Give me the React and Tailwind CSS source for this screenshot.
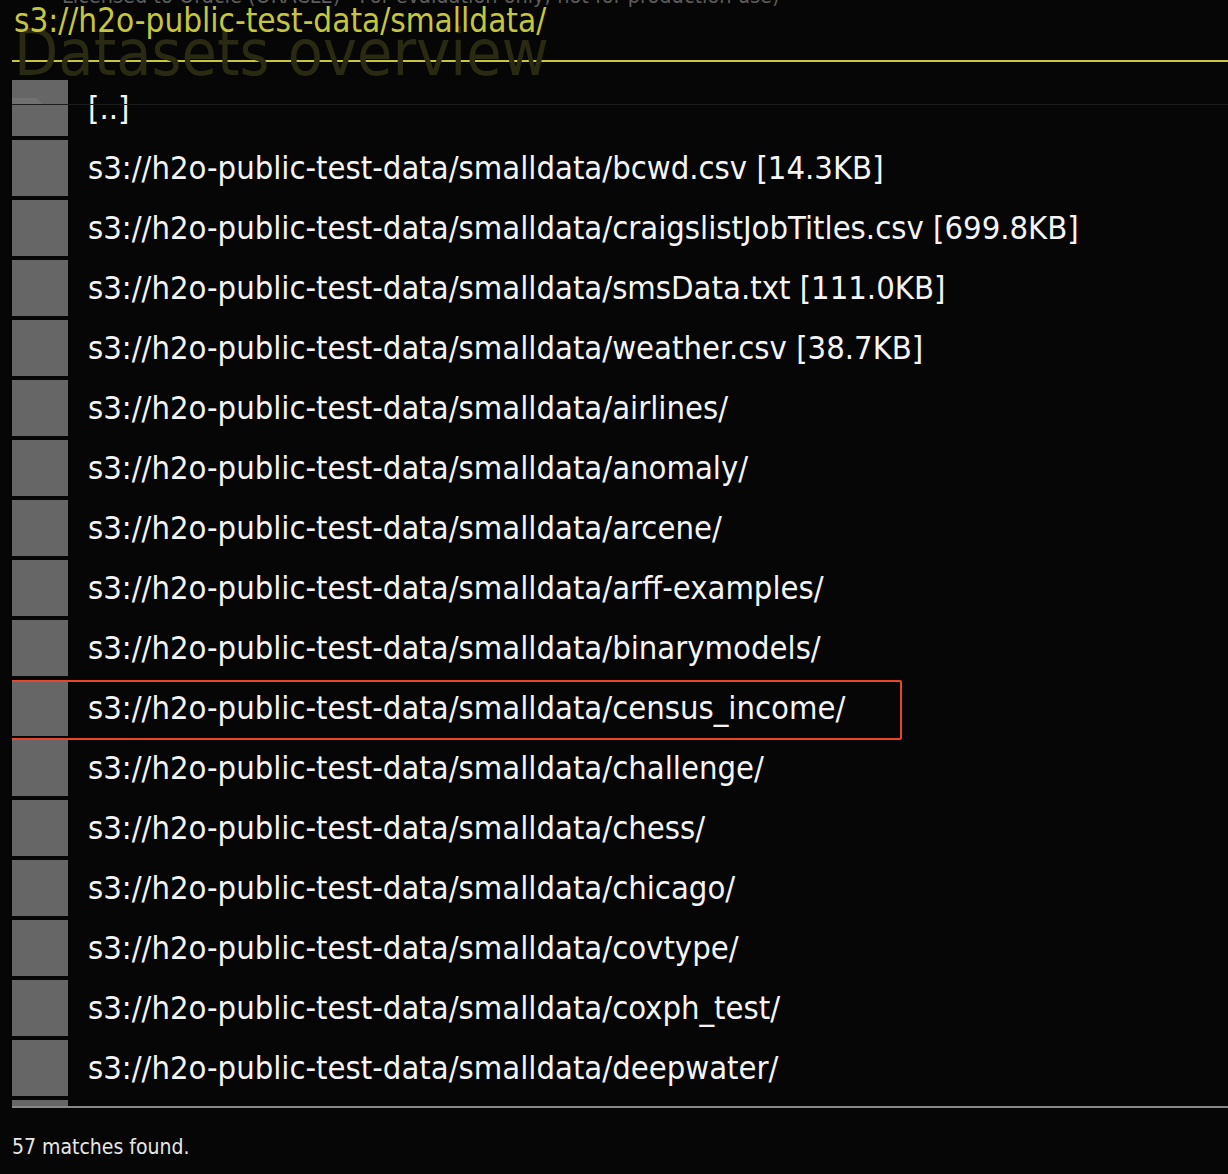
const FONT = "[font-family:'Liberation_Sans_Narrow','DejaVu_Sans_Condensed','Liberation_Sans',sans-serif]";

const base = "s3://h2o-public-test-data/smalldata/";

const rows = [
  { label: "[..]", up: true },
  { label: base + "bcwd.csv [14.3KB]" },
  { label: base + "craigslistJobTitles.csv [699.8KB]" },
  { label: base + "smsData.txt [111.0KB]" },
  { label: base + "weather.csv [38.7KB]" },
  { label: base + "airlines/" },
  { label: base + "anomaly/" },
  { label: base + "arcene/" },
  { label: base + "arff-examples/" },
  { label: base + "binarymodels/" },
  { label: base + "census_income/", marked: true },
  { label: base + "challenge/" },
  { label: base + "chess/" },
  { label: base + "chicago/" },
  { label: base + "covtype/" },
  { label: base + "coxph_test/" },
  { label: base + "deepwater/" },
  { label: base + "diabetes/" },
];

function Row({ label, up, marked }) {
  return (
    <div className="relative flex h-[56px] shrink-0 items-center gap-[20px]">
      <div className="relative h-[56px] w-[56px] shrink-0 bg-[#666666]">
        {up && (
          <div className="absolute left-0 top-[18px] h-[6px] w-[30px] bg-[#707070] [clip-path:polygon(0_0,80%_0,100%_100%,0_100%)]" />
        )}
      </div>
      <span className="whitespace-nowrap text-[32.5px] leading-none text-[#f4f4f4]">{label}</span>
      {up && <div className="absolute left-0 right-0 top-[24px] h-px bg-[#1c1c1c]" />}
      {marked && (
        <div className="absolute -left-[2px] top-0 h-[60px] w-[892px] rounded-[2px] border-2 border-[#e8452c]" />
      )}
    </div>
  );
}

export default function App() {
  return (
    <div className={`relative h-[1174px] w-[1228px] overflow-hidden bg-[#060606] ${FONT}`}>
      <header className="relative ml-[12px] h-[62px] border-b-2 border-[#c6c63c]">
        <div className="absolute -top-[20px] left-[50px] whitespace-nowrap text-[21.5px] text-[#5c5c5c]">
          Licensed to Oracle (ORACLE) - For evaluation only; not for production use)
        </div>
        <div className="absolute left-[2px] top-[21px] whitespace-nowrap text-[64px] font-light leading-none text-[#2a2a12]">
          Datasets overview
        </div>
        <h1 className="relative whitespace-nowrap pl-[2px] pt-[4px] text-[33px] leading-none text-[#c6c63c]">
          {base}
        </h1>
      </header>

      <div className="ml-[12px] flex h-[1046px] flex-col gap-[4px] overflow-hidden border-b-2 border-[#888888] pt-[18px]">
        {rows.map((r) => (
          <Row key={r.label} {...r} />
        ))}
      </div>

      <p className="ml-[12px] mt-[29px] text-[21px] leading-none text-[#e6e6e6]">57 matches found.</p>
    </div>
  );
}
